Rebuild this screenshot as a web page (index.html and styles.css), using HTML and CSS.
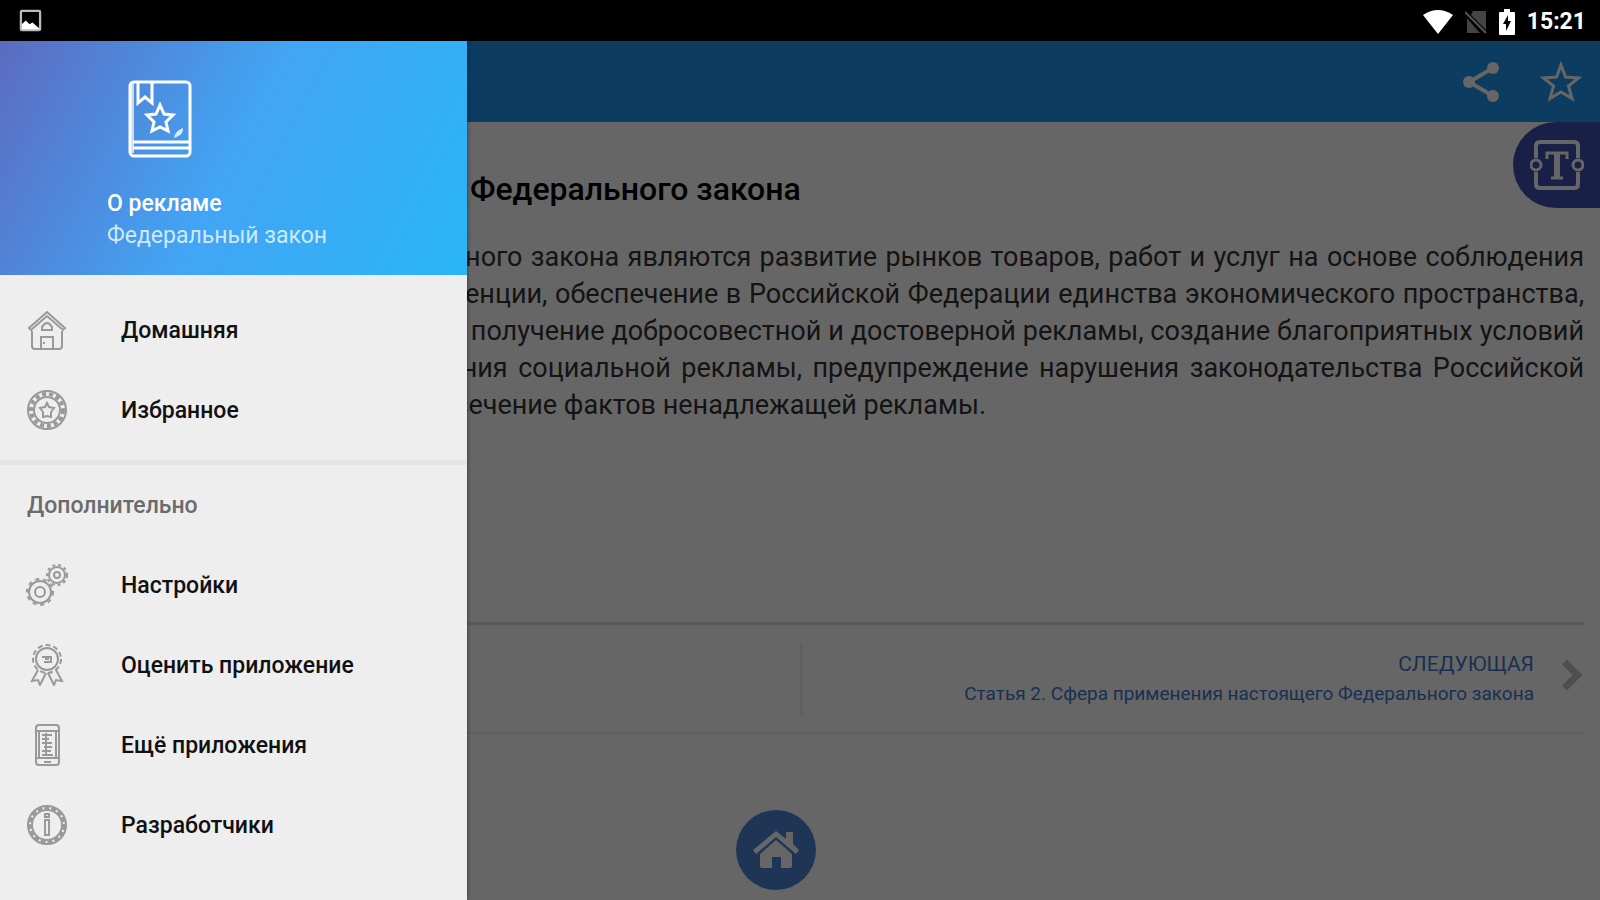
FILE: index.html
```html
<!DOCTYPE html>
<html lang="ru">
<head>
<meta charset="utf-8">
<meta name="viewport" content="width=device-width, initial-scale=1">
<title>О рекламе</title>
<link rel="stylesheet" href="styles.css">
</head>
<body>
<div class="app">
  <div class="status">
    <svg class="status-picture" viewBox="0 0 24 24"><rect x="2" y="2" width="20" height="20" rx="1" fill="none" stroke="#bbb" stroke-width="2.4"/><path d="M3 21v-5l4-4 4 4 3-2 7 6v1z" fill="#fff"/></svg>
    <div class="status-right">
      <svg class="status-wifi" viewBox="0 0 30 24"><path d="M15 24 0 5Q15-5 30 5z" fill="#fff"/></svg>
      <svg class="status-sim" viewBox="0 0 22 24"><path d="M8 1h13v19L6 5zM1 7l14 16H2V9z" fill="#444"/><path d="M0 2l21 21" stroke="#555" stroke-width="2"/></svg>
      <svg class="status-battery" viewBox="0 0 16 26"><path d="M5 0h6v3h4q1 0 1 1v21q0 1-1 1H1q-1 0-1-1V4q0-1 1-1h4z" fill="#fff"/><path d="M9 6 4 15h3v7l5-10H9z" fill="#000"/></svg>
      <time>15:21</time>
    </div>
  </div>
  <div class="screen">
    <header class="toolbar">
      <button class="tool" aria-label="Поделиться"><svg viewBox="0 0 40 42"><path d="M31 7 7 21l24 14" fill="none" stroke="currentColor" stroke-width="4"/><circle cx="31" cy="7" r="6"/><circle cx="7" cy="21" r="6"/><circle cx="31" cy="35" r="6"/></svg></button>
      <button class="tool" aria-label="В избранное"><svg viewBox="0 0 44 42"><path d="m22 4 4.500 12 13 1-10 8 3.500 12.500L22 31l-11 6.500L14.500 25l-10-8 13-1z" fill="none" stroke="currentColor" stroke-width="3"/></svg></button>
    </header>
    <main class="article">
      <button class="text-size" aria-label="Размер текста"><svg viewBox="0 0 54 50" fill="none" stroke="currentColor" stroke-width="4"><path d="M6 18V6q0-4 4-4h34q4 0 4 4v12M6 32v12q0 4 4 4h34q4 0 4-4V32"/><circle cx="6" cy="25" r="5" stroke-width="3"/><circle cx="48" cy="25" r="5" stroke-width="3"/><path d="M17 19v-6h20v6M27 13v24M21 38h12" stroke-width="3"/><path d="M27 13v24" stroke-width="6"/></svg></button>
      <h1>Статья 1. Цели настоящего Федерального закона</h1>
      <p class="body">Целями настоящего Федерального закона являются развитие рынков товаров, работ и услуг на основе соблюдения принципов добросовестной конкуренции, обеспечение в Российской Федерации единства экономического пространства, реализация права потребителей на получение добросовестной и достоверной рекламы, создание благоприятных условий для производства и распространения социальной рекламы, предупреждение нарушения законодательства Российской Федерации о рекламе, а также пресечение фактов ненадлежащей рекламы.</p>
      <nav class="pager">
        <a class="next" href="#next"><span class="next-text"><span class="next-label">СЛЕДУЮЩАЯ</span><span class="next-title">Статья 2. Сфера применения настоящего Федерального закона</span></span>
        <svg viewBox="0 0 22 32"><path d="m3 3 13 13L3 29" fill="none" stroke="#c4c4c4" stroke-width="7"/></svg></a>
      </nav>
      <a class="home" href="#home" aria-label="Домой"><svg viewBox="0 0 46 38"><path d="M23 0 33 8V1h7v12l6 6-3 4L23 6 3 23l-3-4z"/><path d="m23 9 16 14v12q0 2-2 2h-9V26h-9v11H9q-2 0-2-2V23z"/></svg></a>
    </main>
    <div class="scrim"></div>
    <aside class="drawer">
      <div class="drawer-head">
        <svg class="book" viewBox="0 0 64 78" fill="none" stroke="#fff" stroke-width="3"><rect x="2" y="2" width="60" height="74" rx="4"/><path d="M4 3v70" stroke-opacity=".7" stroke-width="4"/><path d="M10 3v20l7-6 7 6V3M5 62h57M5 68h57"/><path d="m32 25 4 9 9 1-7 7 2 9-8-4-8 4 2-9-7-7 9-1z"/><path d="M46 58q1-7 9-10 1 7-9 10z" fill="#fff" fill-opacity=".8" stroke="none"/></svg>
        <div class="drawer-title">О рекламе</div>
        <div class="drawer-sub">Федеральный закон</div>
      </div>
      <nav class="menu">
        <a href="#main"><svg viewBox="0 0 42 42"><path d="M3 19 21 3l18 16-2 2L21 7 5 21zM6 22v15q0 3 3 3h24q3 0 3-3V22M15 40V28h12v12M18 33v2"/><path d="M16 21v-3q5-8 10 0v3z"/></svg>Домашняя</a>
        <a href="#favorites"><svg viewBox="0 0 42 42"><circle cx="21" cy="21" r="19"/><circle cx="21" cy="21" r="13"/><circle cx="21" cy="21" r="16" stroke-width="4" stroke-dasharray="4 3"/><path d="m21 14 2 4 5 1-3 4v5l-4-1-4 1v-5l-3-4 5-1z"/></svg>Избранное</a>
      </nav>
      <h2>Дополнительно</h2>
      <nav class="menu">
        <a href="#settings"><svg viewBox="0 0 42 42"><circle cx="14" cy="28" r="11"/><circle cx="14" cy="28" r="5"/><circle cx="14" cy="28" r="13" stroke-dasharray="4 4"/><circle cx="31" cy="11" r="8"/><circle cx="31" cy="11" r="10" stroke-dasharray="3 3"/><circle cx="31" cy="11" r="3"/></svg>Настройки</a>
        <a href="#rate"><svg viewBox="0 0 42 42"><circle cx="21" cy="15" r="11"/><circle cx="21" cy="15" r="14" stroke-dasharray="5 3"/><path d="M16 13h9v5h-7M19 15h4M12 26 6 37l6-1 2 5 6-12M30 26l6 11-6-1-2 5-6-12"/></svg>Оценить приложение</a>
        <a href="#more"><svg viewBox="0 0 42 42"><rect x="10" y="1" width="23" height="40" rx="3"/><path d="M10 7h23M13 8v26M30 8v26M10 34h23M16 11h10M16 15h7M16 19h10M18 23h8M16 27h9M16 31h11M18 38h7M20 9v22"/></svg>Ещё приложения</a>
        <a href="#developers"><svg viewBox="0 0 42 42"><circle cx="21" cy="21" r="19"/><circle cx="21" cy="21" r="15"/><circle cx="21" cy="21" r="17" stroke-width="3" stroke-dasharray="5 2"/><path d="M19 10h4v3h-4zM19 16h4v15h-4z"/></svg>Разработчики</a>
      </nav>
    </aside>
  </div>
</div>
</body>
</html>
```

FILE: styles.css
```css
* { box-sizing: border-box; }
body { margin: 0; font-family: Roboto, "Liberation Sans", sans-serif; }
a { color: inherit; text-decoration: none; }
button { border: 0; padding: 0; background: none; font: inherit; color: inherit; }
svg { display: block; flex: none; }

.app { display: flex; flex-direction: column; min-height: 100vh; }
.status { display: flex; align-items: center; justify-content: space-between; height: 41px; padding: 0 14px 0 19px; background: #000; color: #fff; }
.status-picture { width: 23px; height: 23px; }
.status-right { display: flex; align-items: center; gap: 12px; padding-top: 3px; }
.status-wifi { width: 30px; height: 24px; }
.status-sim { width: 22px; height: 24px; }
.status-battery { width: 16px; height: 26px; }
.status time { font-size: 23px; font-weight: 700; line-height: 28px; }

.screen { position: relative; flex: 1; display: flex; flex-direction: column; }
.toolbar { display: flex; align-items: center; justify-content: flex-end; gap: 35px; height: 81px; padding: 0 17px; background: #2196f3; color: #fff; }
.tool svg { width: 44px; height: 42px; fill: currentColor; }

.article { position: relative; flex: 1; display: flex; flex-direction: column; padding: 0 16px 0 12px; background: #fff; }
.text-size { position: absolute; top: 0; right: 0; display: flex; align-items: center; width: 87px; height: 86px; padding-left: 17px; border-radius: 43px 0 0 43px; background: #3f51b5; color: #fff; }
.text-size svg { width: 54px; height: 50px; }
h1 { margin: 0; padding: 49px 37px 32px; font-size: 32px; font-weight: 500; line-height: 36px; color: #000; }
.body { margin: 0; font-size: 27px; line-height: 37px; text-align: justify; text-indent: 60px; color: #333; }
.pager { display: flex; justify-content: flex-end; align-items: center; height: 112px; margin: 198px 0 0 4px; border-top: 3px solid #e2e2e2; border-bottom: 2px solid #f0f0f0; }
.next { display: flex; align-items: center; justify-content: flex-end; gap: 27px; width: 50%; height: 74px; border-left: 3px solid #f0f0f0; color: #3e78cf; }
.next svg { width: 23px; height: 40px; padding-bottom: 8px; }
.next-text { display: flex; flex-direction: column; align-items: flex-end; gap: 5px; }
.next-label { font-size: 21px; line-height: 26px; }
.next-title { font-size: 19px; line-height: 24px; }
.home { display: flex; align-items: center; justify-content: center; align-self: center; width: 80px; height: 80px; margin: 76px 44px 10px 0; border-radius: 50%; background: #4e86d6; color: #fff; }
.home svg { width: 46px; height: 38px; fill: currentColor; }

.scrim { position: absolute; inset: 0; background: rgba(0, 0, 0, .6); }
.drawer { position: absolute; top: 0; bottom: 0; left: 0; width: 467px; background: #eee; box-shadow: 0 0 4px rgba(0, 0, 0, .5); }
.drawer-head { display: flex; flex-direction: column; height: 234px; padding: 39px 107px 0; background: linear-gradient(117deg, #5c6bc0, #42a5f5 50%, #29b6f6); color: #fff; }
.book { width: 64px; height: 78px; margin: 0 0 30px 21px; }
.drawer-title { font-size: 23px; font-weight: 500; line-height: 32px; }
.drawer-sub { font-size: 23px; line-height: 32px; color: #cfe8fd; white-space: nowrap; }
.menu { display: flex; flex-direction: column; }
.drawer-head + .menu { padding: 16px 0 9px; border-bottom: 5px solid #e4e4e4; }
.menu a { display: flex; align-items: center; gap: 53px; height: 80px; padding-left: 26px; font-size: 23px; font-weight: 500; line-height: 28px; color: #111; }
.menu svg { width: 42px; height: 42px; margin-bottom: 3px; fill: none; stroke: #999; stroke-width: 2; }
h2 { margin: 0; padding: 25px 27px 24px; font-size: 23px; font-weight: 500; line-height: 32px; color: #6b6b6b; }
```
